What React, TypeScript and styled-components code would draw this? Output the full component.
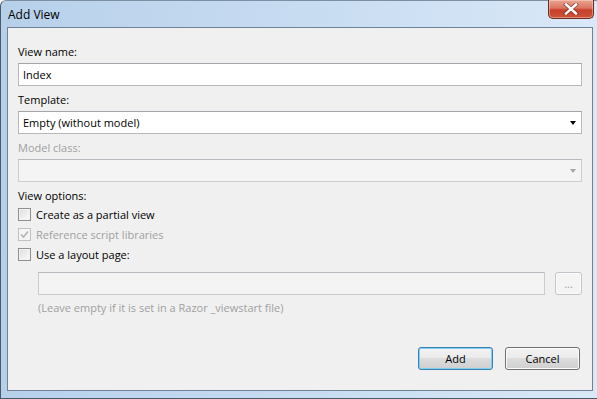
import styled, { createGlobalStyle, css } from 'styled-components';

const GlobalStyle = createGlobalStyle`
  html, body {
    margin: 0;
    padding: 0;
    background: #ffffff;
  }
  #root {
    width: 597px;
    height: 399px;
    overflow: hidden;
  }
`;

const font = `'Open Sans', 'Noto Sans', 'Liberation Sans', sans-serif`;

const Window = styled.div`
  box-sizing: border-box;
  width: 601px;
  height: 399px;
  display: flex;
  flex-direction: column;
  border: 1px solid #4a5a6c;
  border-top-color: #7d8fa3;
  border-radius: 6px 6px 0 0;
  background: linear-gradient(90deg, #b7d0ea 0%, #c9ddf2 55%, #dae8f7 100%);
  font-family: ${font};
  font-size: 11px;
  color: #000;
`;

const TitleBar = styled.div`
  height: 26px;
  display: flex;
  justify-content: space-between;
  align-items: flex-start;
  padding-left: 7px;
`;

const Title = styled.span`
  margin-top: 5px;
  font-size: 12px;
  color: #000;
`;

const CloseButton = styled.div`
  box-sizing: border-box;
  width: 46px;
  height: 19px;
  margin-right: 6px;
  margin-top: -1px;
  display: flex;
  align-items: center;
  justify-content: center;
  border: 1px solid #6b2a22;
  border-top: none;
  border-radius: 0 0 5px 5px;
  background: linear-gradient(180deg, #eba592 0%, #dc7462 45%, #c7402b 55%, #cc5238 100%);
  box-shadow: inset 0 0 0 1px rgba(255, 220, 210, 0.45);
`;

const Client = styled.div`
  flex: 1;
  margin: 0 7px 7px 6px;
  display: flex;
  flex-direction: column;
  border: 1px solid #6f8298;
  background: #f0f0f0;
  padding: 10px 10px 20px 10px;
`;

const Label = styled.div<{ $disabled?: boolean; $tight?: boolean }>`
  margin-top: 6px;
  height: 16px;
  line-height: 16px;
  margin-bottom: ${(p) => (p.$tight ? 0 : 3)}px;
  color: ${(p) => (p.$disabled ? '#a0a0a0' : '#000')};
`;

const fieldBox = css<{ $disabled?: boolean }>`
  box-sizing: border-box;
  height: 23px;
  flex-shrink: 0;
  display: flex;
  align-items: center;
  padding: 0 4px;
  border: 1px solid ${(p) => (p.$disabled ? '#c9cdd1' : '#b5b8bd')};
  border-top-color: ${(p) => (p.$disabled ? '#b7bbbf' : '#a3a6ab')};
  background: ${(p) => (p.$disabled ? '#f4f4f4' : '#ffffff')};
`;

const TextBox = styled.div<{ $disabled?: boolean }>`
  ${fieldBox};
`;

const PathBox = styled(TextBox)`
  flex: 1;
`;

const Select = styled.div<{ $disabled?: boolean }>`
  ${fieldBox};
  justify-content: space-between;
  padding-right: 5px;
`;

const Arrow = styled.span<{ $disabled?: boolean }>`
  width: 0;
  height: 0;
  border-left: 3.5px solid transparent;
  border-right: 3.5px solid transparent;
  border-top: 4px solid ${(p) => (p.$disabled ? '#a6a6a6' : '#000')};
`;

const CheckList = styled.div`
  display: flex;
  flex-direction: column;
`;

const CheckRow = styled.label<{ $disabled?: boolean }>`
  height: 20px;
  display: flex;
  align-items: center;
  gap: 5px;
  color: ${(p) => (p.$disabled ? '#a0a0a0' : '#000')};
`;

const Box = styled.span<{ $disabled?: boolean }>`
  box-sizing: border-box;
  width: 13px;
  height: 13px;
  display: flex;
  align-items: center;
  justify-content: center;
  border: 1px solid ${(p) => (p.$disabled ? '#c2c2c2' : '#8e8f8f')};
  background: ${(p) =>
    p.$disabled
      ? '#f4f4f4'
      : 'linear-gradient(135deg, #dcdcdc 0%, #f0f0f0 60%, #fafafa 100%)'};
  box-shadow: inset 0 0 0 1px #f4f4f4;
`;

const Indented = styled.div`
  margin-left: 20px;
  display: flex;
  flex-direction: column;
`;

const FileRow = styled.div`
  margin-top: 8px;
  display: flex;
  gap: 10px;
`;

const Hint = styled.div`
  margin-top: 5px;
  height: 16px;
  line-height: 16px;
  color: #a0a0a0;
`;

const Spacer = styled.div`
  flex: 1;
`;

const Footer = styled.div`
  display: flex;
  justify-content: flex-end;
  gap: 12px;
  margin-right: 2px;
`;

const Button = styled.div<{ $default?: boolean; $disabled?: boolean; $width?: number }>`
  box-sizing: border-box;
  width: ${(p) => p.$width ?? 75}px;
  height: 23px;
  flex-shrink: 0;
  display: flex;
  align-items: center;
  justify-content: center;
  border-radius: 3px;
  border: 1px solid ${(p) => (p.$disabled ? '#c2c5c9' : p.$default ? '#3c7fb1' : '#707070')};
  color: ${(p) => (p.$disabled ? '#a0a0a0' : '#000')};
  background: ${(p) =>
    p.$disabled
      ? '#f4f4f4'
      : 'linear-gradient(180deg, #f2f2f2 0%, #ebebeb 49%, #dddddd 50%, #cfcfcf 100%)'};
  box-shadow: inset 0 0 0 1px
    ${(p) => (p.$disabled ? '#fbfbfb' : p.$default ? '#7fd1f0' : '#fcfcfc')};
`;

const CheckMark = ({ color }: { color: string }) => (
  <svg width="9" height="9" viewBox="0 0 9 9">
    <path d="M1 4.5 L3.5 7 L8 1.5" fill="none" stroke={color} strokeWidth="1.6" />
  </svg>
);

const CloseGlyph = () => (
  <svg width="16" height="12" viewBox="0 0 16 12">
    <path
      d="M3 1.5 L13 10.5 M13 1.5 L3 10.5"
      stroke="#5a2a24"
      strokeWidth="4.2"
      strokeLinecap="square"
      opacity="0.55"
    />
    <path d="M3 1.5 L13 10.5 M13 1.5 L3 10.5" stroke="#ffffff" strokeWidth="2.4" strokeLinecap="square" />
  </svg>
);

export default function App() {
  return (
    <>
      <GlobalStyle />
      <Window>
        <TitleBar>
          <Title>Add View</Title>
          <CloseButton>
            <CloseGlyph />
          </CloseButton>
        </TitleBar>
        <Client>
          <Label>View name:</Label>
          <TextBox>Index</TextBox>

          <Label>Template:</Label>
          <Select>
            <span>Empty (without model)</span>
            <Arrow />
          </Select>

          <Label $disabled>Model class:</Label>
          <Select $disabled>
            <span />
            <Arrow $disabled />
          </Select>

          <Label $tight>View options:</Label>
          <CheckList>
            <CheckRow>
              <Box />
              Create as a partial view
            </CheckRow>
            <CheckRow $disabled>
              <Box $disabled>
                <CheckMark color="#b4b4b4" />
              </Box>
              Reference script libraries
            </CheckRow>
            <CheckRow>
              <Box />
              Use a layout page:
            </CheckRow>
          </CheckList>

          <Indented>
            <FileRow>
              <PathBox $disabled />
              <Button $disabled $width={27}>
                ...
              </Button>
            </FileRow>
            <Hint>(Leave empty if it is set in a Razor _viewstart file)</Hint>
          </Indented>

          <Spacer />
          <Footer>
            <Button $default>Add</Button>
            <Button>Cancel</Button>
          </Footer>
        </Client>
      </Window>
    </>
  );
}
